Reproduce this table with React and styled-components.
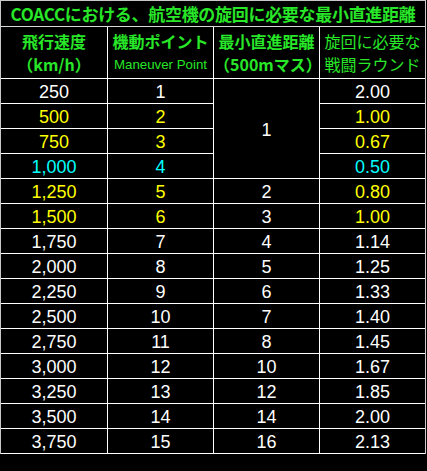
import React from "react";
import styled, { createGlobalStyle } from "styled-components";

const GREEN = "#28e628";
const COLORS = { w: "#ffffff", y: "#ffff00", c: "#00ffff" };

const Global = createGlobalStyle`
  html, body {
    margin: 0;
    padding: 0;
    background: #000;
  }
  body {
    font-family: "Liberation Sans", "Noto Sans CJK JP", sans-serif;
  }
`;

const Table = styled.table`
  width: 426px;
  table-layout: fixed;
  border-collapse: separate;
  border-spacing: 0;
  border-top: 1px solid #c8c8c8;
  border-left: 1px solid #c8c8c8;
  border-right: 1px solid #c8c8c8;
  background: #000;
`;

const Col = styled.col`
  width: ${(p) => p.$w}px;
`;

const TitleCell = styled.td`
  height: 25px;
  padding: 0;
  border-bottom: 1px solid #d8d8d8;
  text-align: center;
  vertical-align: middle;
  color: ${GREEN};
  font-family: "Noto Sans CJK JP", sans-serif;
  font-weight: 700;
  font-size: 17px;
  line-height: 20px;
  letter-spacing: -0.3px;
  white-space: nowrap;
`;

const HeadCell = styled.td`
  height: 52px;
  padding: 1px 0 0;
  box-sizing: border-box;
  border-right: 1px solid #fff;
  border-bottom: 1px solid #fff;
  &:last-child {
    border-right: none;
  }
  text-align: center;
  vertical-align: middle;
  color: ${GREEN};
  font-family: "Noto Sans CJK JP", sans-serif;
  white-space: nowrap;
`;

const HeadLine = styled.div`
  font-size: 16px;
  line-height: 23.3px;
  font-weight: ${(p) => (p.$bold ? 700 : 400)};
`;

const SubLine = styled.div`
  font-family: "Liberation Sans", sans-serif;
  font-size: 13.3px;
  line-height: 23.3px;
`;

const Cell = styled.td`
  height: 25px;
  padding: 2px 0 0;
  box-sizing: border-box;
  border-right: 1px solid #fff;
  border-bottom: 1px solid #fff;
  &:last-child {
    border-right: none;
  }
  text-align: center;
  vertical-align: middle;
  color: ${(p) => COLORS[p.$c || "w"]};
  font-family: "Liberation Sans", sans-serif;
  font-size: 18px;
  line-height: 20px;
`;

const rows = [
  ["250", "1", "1", "2.00", "w", "w", "w"],
  ["500", "2", null, "1.00", "y", "y", "w"],
  ["750", "3", null, "0.67", "y", "y", "w"],
  ["1,000", "4", null, "0.50", "c", "c", "w"],
  ["1,250", "5", "2", "0.80", "y", "y", "w"],
  ["1,500", "6", "3", "1.00", "y", "y", "w"],
  ["1,750", "7", "4", "1.14", "w", "w", "w"],
  ["2,000", "8", "5", "1.25", "w", "w", "w"],
  ["2,250", "9", "6", "1.33", "w", "w", "w"],
  ["2,500", "10", "7", "1.40", "w", "w", "w"],
  ["2,750", "11", "8", "1.45", "w", "w", "w"],
  ["3,000", "12", "10", "1.67", "w", "w", "w"],
  ["3,250", "13", "12", "1.85", "w", "w", "w"],
  ["3,500", "14", "14", "2.00", "w", "w", "w"],
  ["3,750", "15", "16", "2.13", "w", "w", "w"],
];

export default function App() {
  return (
    <>
      <Global />
      <Table>
        <colgroup>
          <Col $w={107} />
          <Col $w={106} />
          <Col $w={106} />
          <Col $w={105} />
        </colgroup>
        <tbody>
          <tr>
            <TitleCell colSpan={4}>COACCにおける、航空機の旋回に必要な最小直進距離</TitleCell>
          </tr>
          <tr>
            <HeadCell>
              <HeadLine $bold>飛行速度</HeadLine>
              <HeadLine $bold>（km/h）</HeadLine>
            </HeadCell>
            <HeadCell>
              <HeadLine $bold>機動ポイント</HeadLine>
              <SubLine>Maneuver Point</SubLine>
            </HeadCell>
            <HeadCell>
              <HeadLine $bold>最小直進距離</HeadLine>
              <HeadLine $bold>（500mマス）</HeadLine>
            </HeadCell>
            <HeadCell>
              <HeadLine>旋回に必要な</HeadLine>
              <HeadLine>戦闘ラウンド</HeadLine>
            </HeadCell>
          </tr>
          {rows.map(([speed, mp, dist, rounds, c1, c4, c3], i) => (
            <tr key={speed}>
              <Cell $c={c1}>{speed}</Cell>
              <Cell $c={c1}>{mp}</Cell>
              {dist !== null && (
                <Cell $c={c3} rowSpan={i === 0 ? 4 : 1}>
                  {dist}
                </Cell>
              )}
              <Cell $c={c4}>{rounds}</Cell>
            </tr>
          ))}
        </tbody>
      </Table>
    </>
  );
}
